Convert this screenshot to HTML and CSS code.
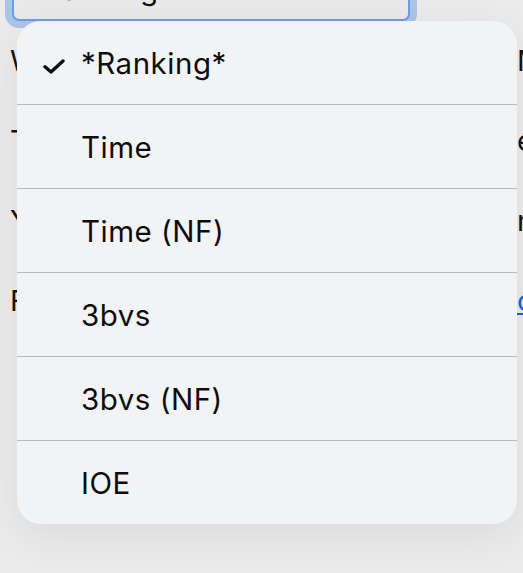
FILE: index.html
```html
<!DOCTYPE html>
<html lang="en">
<head>
    <meta charset="UTF-8">
    <meta name="viewport" content="width=device-width, initial-scale=1.0">
    <title>Leaderboard</title>
    <link rel="stylesheet" href="styles.css">
</head>
<body>

<div class="page">
    <div class="select">*Ranking*</div>

    <div class="field"><span class="label">Width</span><span class="value">Mode</span></div>
    <div class="field"><span class="label">Time</span><span class="value">easy</span></div>
    <div class="field"><span class="label">Year</span><span class="value">none</span></div>
    <div class="field"><span class="label">Filter</span><a class="value link" href="#">clear</a></div>
</div>

<!-- Native select menu, open over the form -->
<ul class="menu">
    <li class="option selected">
        <span class="check">
            <svg width="22" height="15" viewBox="0 0 22 15">
                <path d="M2 7.8 L8 13 L20 2" fill="none" stroke="#111" stroke-width="3.4" stroke-linecap="round" stroke-linejoin="round"/>
            </svg>
        </span>
        <span class="text">*Ranking*</span>
    </li>
    <li class="option"><span class="check"></span><span class="text">Time</span></li>
    <li class="option"><span class="check"></span><span class="text">Time (NF)</span></li>
    <li class="option"><span class="check"></span><span class="text">3bvs</span></li>
    <li class="option"><span class="check"></span><span class="text">3bvs (NF)</span></li>
    <li class="option"><span class="check"></span><span class="text">IOE</span></li>
</ul>

</body>
</html>
```

FILE: styles.css
```css
body {
    margin: 0;
    background-color: #ebebeb;
    font-family: Inter, "Noto Sans", sans-serif;
    color: #111;
    overflow: hidden;
    height: 573px;
}
.page {
    padding: 0 10px;
}
.select {
    margin: -35px 2px 0;
    width: 398px;
    height: 56px;
    box-sizing: border-box;
    padding: 0 14px;
    border: 2px solid #6d9de6;
    border-radius: 7px;
    box-shadow: 0 0 0 7px #abc5ea;
    background-color: #e9e9e9;
    font-size: 29.5px;
    letter-spacing: 0.5px;
    line-height: 44px;
}
.field {
    display: grid;
    grid-template-columns: 507px auto;
    height: 80px;
    line-height: 80px;
    font-size: 29px;
    white-space: nowrap;
}
.field:first-of-type {
    margin-top: 35px;
}
.value {
    color: #111;
}
.link {
    color: #1463d8;
    text-decoration: underline;
}
.menu {
    position: absolute;
    left: 17px;
    top: 21px;
    width: 500px;
    margin: 0;
    padding: 0;
    list-style: none;
    background-color: #f2f3f4;
    border-radius: 24px;
    box-shadow: 0 12px 44px rgba(0, 0, 0, 0.07);
    overflow: hidden;
}
.option {
    display: flex;
    align-items: center;
    height: 83px;
    padding-left: 26px;
    border-bottom: 1px solid #b8b9bb;
    font-size: 29.5px;
    letter-spacing: 0.5px;
    color: #0d0d0d;
}
.option:last-child {
    border-bottom: none;
}
.check {
    width: 38px;
    flex-shrink: 0;
    padding-top: 7px;
}
.check svg {
    display: block;
}
```
